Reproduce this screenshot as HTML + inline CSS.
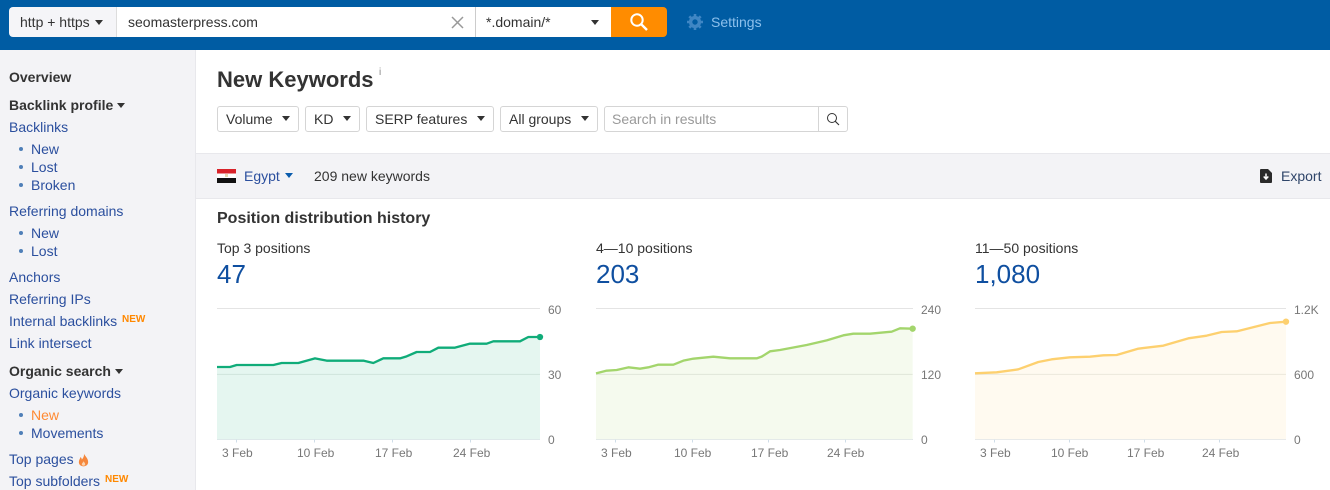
<!DOCTYPE html>
<html><head><meta charset="utf-8">
<style>
html,body{margin:0;padding:0;width:1330px;height:490px;overflow:hidden;background:#fff}
body{font-family:"Liberation Sans",Arial,sans-serif;font-size:14px;color:#333;position:relative}
.t{position:absolute;white-space:nowrap;line-height:18px}
.b{position:absolute;box-sizing:border-box}
.l{color:#2b4f9e}
.bold{font-weight:bold;color:#333}
.dot{position:absolute;width:4px;height:4px;border-radius:50%;background:#4f7fb8;left:19px}
.new{position:absolute;white-space:nowrap;color:#ff8800;font-size:10px;font-weight:bold;line-height:12px}
.tri{position:absolute;width:0;height:0;border-left:4px solid transparent;border-right:4px solid transparent;border-top:5px solid #333}
.btn{position:absolute;top:106px;height:26px;box-sizing:border-box;border:1px solid #d5d5d5;border-radius:3px;background:#fff}
.ax{position:absolute;white-space:nowrap;color:#777;font-size:12px;line-height:14px}
.dl{position:absolute;white-space:nowrap;color:#777;font-size:12px;line-height:14px;top:446px}
</style></head>
<body>
<div class="b" style="left:0;top:0;width:1330px;height:50px;background:#005ca3"></div>
<div class="b" style="left:9px;top:7px;width:108px;height:30px;background:#f5f5f8;border-radius:4px 0 0 4px;border-right:1px solid #ddd"></div>
<div class="b" style="left:117px;top:7px;width:358px;height:30px;background:#fff"></div>
<div class="b" style="left:475px;top:7px;width:136px;height:30px;background:#fff;border-left:1px solid #ccc"></div>
<div class="b" style="left:611px;top:7px;width:56px;height:30px;background:#ff8c00;border-radius:0 4px 4px 0"></div>
<div class="t" style="left:20px;top:13px">http + https</div>
<div class="tri" style="left:95px;top:20px"></div>
<div class="t" style="left:128px;top:13px">seomasterpress.com</div>
<svg class="b" style="left:450px;top:15px" width="15" height="15" viewBox="0 0 15 15"><path d="M2 2L13 13M13 2L2 13" stroke="#999" stroke-width="1.5" fill="none"/></svg>
<div class="t" style="left:486px;top:13px">*.domain/*</div>
<div class="tri" style="left:591px;top:20px"></div>
<svg class="b" style="left:629px;top:12px" width="20" height="20" viewBox="0 0 20 20"><circle cx="8" cy="8" r="5.7" stroke="#fff" stroke-width="2" fill="none"/><path d="M12 12L18 18" stroke="#fff" stroke-width="2.4" fill="none"/></svg>
<svg class="b" style="left:687px;top:14px" width="16" height="16" viewBox="0 0 16 16"><circle cx="8" cy="8" r="4.4" stroke="#3f86c4" stroke-width="3.4" fill="none"/><path d="M8 0V3M8 13V16M0 8H3M13 8H16M2.3 2.3L4.5 4.5M11.5 11.5L13.7 13.7M2.3 13.7L4.5 11.5M11.5 4.5L13.7 2.3" stroke="#3f86c4" stroke-width="2.6"/></svg>
<div class="t" style="left:711px;top:13px;color:#8cc0ec">Settings</div>

<div class="b" style="left:0;top:50px;width:196px;height:440px;background:#f3f3f6;border-right:1px solid #e8e8ec"></div>
<div class="t bold" style="left:9px;top:68px">Overview</div>
<div class="t bold" style="left:9px;top:96px">Backlink profile</div>
<div class="tri" style="left:117px;top:103px"></div>
<div class="t l" style="left:9px;top:118px">Backlinks</div>
<div class="dot" style="top:147px"></div><div class="t l" style="left:31px;top:140px">New</div>
<div class="dot" style="top:165px"></div><div class="t l" style="left:31px;top:158px">Lost</div>
<div class="dot" style="top:183px"></div><div class="t l" style="left:31px;top:176px">Broken</div>
<div class="t l" style="left:9px;top:202px">Referring domains</div>
<div class="dot" style="top:231px"></div><div class="t l" style="left:31px;top:224px">New</div>
<div class="dot" style="top:249px"></div><div class="t l" style="left:31px;top:242px">Lost</div>
<div class="t l" style="left:9px;top:268px">Anchors</div>
<div class="t l" style="left:9px;top:290px">Referring IPs</div>
<div class="t l" style="left:9px;top:312px">Internal backlinks</div>
<div class="new" style="left:122px;top:314px">NEW</div>
<div class="t l" style="left:9px;top:334px">Link intersect</div>
<div class="t bold" style="left:9px;top:362px">Organic search</div>
<div class="tri" style="left:115px;top:369px"></div>
<div class="t l" style="left:9px;top:384px">Organic keywords</div>
<div class="dot" style="top:413px"></div><div class="t" style="left:31px;top:406px;color:#ff8a33">New</div>
<div class="dot" style="top:431px"></div><div class="t l" style="left:31px;top:424px">Movements</div>
<div class="t l" style="left:9px;top:450px">Top pages</div>
<svg class="b" style="left:78px;top:453px" width="11" height="14" viewBox="0 0 13 15"><path d="M7 0C8 3 12 5 12 10C12 13 9.500 15 6.500 15C3.500 15 1 13 1 10C1 7.500 2.500 6 3 4C4 5 4.500 6 4.500 7C6 5.500 7.500 3 7 0Z" fill="#f5873c"/><path d="M6.500 9C7.500 10.500 8.500 11 8.500 12.500C8.500 13.500 7.500 14.300 6.500 14.300C5.500 14.300 4.500 13.500 4.500 12.500C4.500 11.300 6 10.500 6.500 9Z" fill="#fbd3ae"/></svg>
<div class="t l" style="left:9px;top:472px">Top subfolders</div>
<div class="new" style="left:105px;top:474px">NEW</div>

<div class="t" style="left:217px;top:66px;font-size:22px;font-weight:bold;line-height:28px;color:#333">New Keywords</div>
<div class="t" style="left:379px;top:67px;font-size:10px;line-height:12px;color:#888">i</div>

<div class="btn" style="left:217px;width:82px"></div><div class="t" style="left:226px;top:110px">Volume</div><div class="tri" style="left:282px;top:116px"></div>
<div class="btn" style="left:305px;width:55px"></div><div class="t" style="left:314px;top:110px">KD</div><div class="tri" style="left:343px;top:116px"></div>
<div class="btn" style="left:366px;width:128px"></div><div class="t" style="left:375px;top:110px">SERP features</div><div class="tri" style="left:477px;top:116px"></div>
<div class="btn" style="left:500px;width:98px"></div><div class="t" style="left:509px;top:110px">All groups</div><div class="tri" style="left:581px;top:116px"></div>
<div class="btn" style="left:604px;width:244px"></div>
<div class="b" style="left:818px;top:106px;width:1px;height:26px;background:#d5d5d5"></div>
<div class="t" style="left:612px;top:110px;color:#999">Search in results</div>
<svg class="b" style="left:826px;top:112px" width="14" height="14" viewBox="0 0 14 14"><circle cx="6" cy="6" r="4.500" stroke="#333" stroke-width="1" fill="none"/><path d="M9.300 9.300L13 13" stroke="#333" stroke-width="1.100"/></svg>

<div class="b" style="left:196px;top:153px;width:1134px;height:46px;background:#f3f3f6;border-top:1px solid #e8e8ec;border-bottom:1px solid #e8e8ec"></div>
<div class="b" style="left:217px;top:169px;width:19px;height:14px;background:linear-gradient(#d8232a 0 33%,#fff 33% 66%,#111 66% 100%)"></div>
<div class="b" style="left:225px;top:174px;width:3px;height:3px;background:#e6d9b0"></div>
<div class="t l" style="left:244px;top:167px">Egypt</div>
<div class="tri" style="left:285px;top:173px;border-top-color:#0a5cad"></div>
<div class="t" style="left:314px;top:167px">209 new keywords</div>
<svg class="b" style="left:1260px;top:169px" width="12" height="14" viewBox="0 0 12 14"><path d="M1 0H8L12 4V13Q12 14 11 14H1Q0 14 0 13V1Q0 0 1 0Z" fill="#2b2b2b"/><path d="M6 4.500V9.500M3.700 7.500L6 10L8.300 7.500" stroke="#fff" stroke-width="1.500" fill="none"/></svg>
<div class="t" style="left:1281px;top:167px;color:#2f4569">Export</div>

<div class="t" style="left:217px;top:209px;font-size:16px;font-weight:bold;line-height:20px;color:#333">Position distribution history</div>
<div class="t" style="left:217px;top:239px">Top 3 positions</div>
<div class="t" style="left:596px;top:239px">4—10 positions</div>
<div class="t" style="left:975px;top:239px">11—50 positions</div>
<div class="t" style="left:217px;top:259px;font-size:26px;line-height:30px;color:#0f4fa0">47</div>
<div class="t" style="left:596px;top:259px;font-size:26px;line-height:30px;color:#0f4fa0">203</div>
<div class="t" style="left:975px;top:259px;font-size:26px;line-height:30px;color:#0f4fa0">1,080</div>

<svg class="b" style="left:0;top:0" width="1330" height="490" viewBox="0 0 1330 490">
<g stroke="#e4e4e4" stroke-width="1">
<path d="M217 308.500H540M596 308.500H913M975 308.500H1286"/>
<path d="M217 439.500H540M596 439.500H913M975 439.500H1286" stroke="#dbe1e6"/>
<path d="M236.500 439V442.500M314.500 439V442.500M392.500 439V442.500M470.500 439V442.500M615.500 439V442.500M692.500 439V442.500M768.500 439V442.500M845.500 439V442.500M994.500 439V442.500M1069.500 439V442.500M1144.500 439V442.500M1219.500 439V442.500" stroke="#cfdde8"/>
</g>
<g transform="translate(200 295) scale(.33333)">
<path d="M51 433V216L90 216L110 210L220 210L245 204L295 204L345 190L380 197L490 197L520 204L550 190L600 190L620 184L650 171L690 171L715 158L765 158L810 146L860 146L880 139L960 139L985 126L1020 126V433Z" fill="#e5f6f0"/>
<path d="M51 238H1020" stroke="#cfe3dc" stroke-width="3"/>
<path d="M51 216L90 216L110 210L220 210L245 204L295 204L345 190L380 197L490 197L520 204L550 190L600 190L620 184L650 171L690 171L715 158L765 158L810 146L860 146L880 139L960 139L985 126L1020 126" fill="none" stroke="#10ac79" stroke-width="7" stroke-linejoin="round"/>
<circle cx="1020" cy="126" r="9.500" fill="#10ac79"/>
</g>
<g transform="translate(580 295) scale(.33333)">
<path d="M48 433V235L80 227L110 225L145 217L180 221L205 217L235 209L280 209L310 197L340 191L400 185L450 190L530 190L545 185L570 169L600 165L680 150L740 136L790 121L820 116L870 116L935 110L960 100L998 101V433Z" fill="#f5faee"/>
<path d="M48 238H998" stroke="#dfe6d8" stroke-width="3"/>
<path d="M48 235L80 227L110 225L145 217L180 221L205 217L235 209L280 209L310 197L340 191L400 185L450 190L530 190L545 185L570 169L600 165L680 150L740 136L790 121L820 116L870 116L935 110L960 100L998 101" fill="none" stroke="#a3d56c" stroke-width="7" stroke-linejoin="round"/>
<circle cx="998" cy="101" r="9.500" fill="#a3d56c"/>
</g>
<g transform="translate(950 295) scale(.33333)">
<path d="M75 433V235L140 232L205 223L265 201L305 193L360 187L420 185L460 181L500 180L565 161L640 152L715 130L770 122L815 111L860 109L960 84L1008 80V433Z" fill="#fffaf0"/>
<path d="M75 238H1008" stroke="#ebe7dc" stroke-width="3"/>
<path d="M75 235L140 232L205 223L265 201L305 193L360 187L420 185L460 181L500 180L565 161L640 152L715 130L770 122L815 111L860 109L960 84L1008 80" fill="none" stroke="#fdd06f" stroke-width="7" stroke-linejoin="round"/>
<circle cx="1008" cy="80" r="9.500" fill="#fdd06f"/>
</g>
</svg>

<div class="ax" style="left:548px;top:303px">60</div>
<div class="ax" style="left:548px;top:368px">30</div>
<div class="ax" style="left:548px;top:433px">0</div>
<div class="ax" style="left:921px;top:303px">240</div>
<div class="ax" style="left:921px;top:368px">120</div>
<div class="ax" style="left:921px;top:433px">0</div>
<div class="ax" style="left:1294px;top:303px">1.2K</div>
<div class="ax" style="left:1294px;top:368px">600</div>
<div class="ax" style="left:1294px;top:433px">0</div>

<div class="dl" style="left:222px">3 Feb</div>
<div class="dl" style="left:297px">10 Feb</div>
<div class="dl" style="left:375px">17 Feb</div>
<div class="dl" style="left:453px">24 Feb</div>
<div class="dl" style="left:601px">3 Feb</div>
<div class="dl" style="left:674px">10 Feb</div>
<div class="dl" style="left:751px">17 Feb</div>
<div class="dl" style="left:827px">24 Feb</div>
<div class="dl" style="left:980px">3 Feb</div>
<div class="dl" style="left:1051px">10 Feb</div>
<div class="dl" style="left:1127px">17 Feb</div>
<div class="dl" style="left:1202px">24 Feb</div>
</body></html>
